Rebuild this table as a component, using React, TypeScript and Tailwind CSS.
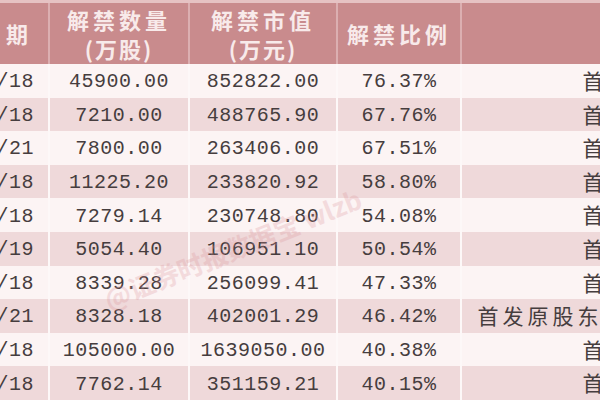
import React from "react";

type Row = {
  date: string;
  shares: string;
  value: string;
  ratio: string;
  kind: string;
};

const ROWS: Row[] = [
  { date: "2019/01/18", shares: "45900.00", value: "852822.00", ratio: "76.37%", kind: "首发原股东限售股份" },
  { date: "2019/01/18", shares: "7210.00", value: "488765.90", ratio: "67.76%", kind: "首发原股东限售股份" },
  { date: "2019/01/21", shares: "7800.00", value: "263406.00", ratio: "67.51%", kind: "首发原股东限售股份" },
  { date: "2019/01/18", shares: "11225.20", value: "233820.92", ratio: "58.80%", kind: "首发原股东限售股份" },
  { date: "2019/01/18", shares: "7279.14", value: "230748.80", ratio: "54.08%", kind: "首发原股东限售股份" },
  { date: "2019/01/19", shares: "5054.40", value: "106951.10", ratio: "50.54%", kind: "首发原股东限售股份" },
  { date: "2019/01/18", shares: "8339.28", value: "256099.41", ratio: "47.33%", kind: "首发原股东限售股份" },
  { date: "2019/01/21", shares: "8328.18", value: "402001.29", ratio: "46.42%", kind: "首发原股东限售股份,首发机构配售股份" },
  { date: "2019/01/18", shares: "105000.00", value: "1639050.00", ratio: "40.38%", kind: "首发原股东限售股份" },
  { date: "2019/01/18", shares: "7762.14", value: "351159.21", ratio: "40.15%", kind: "首发原股东限售股份" },
];

const NUM = "font-['Liberation_Mono',monospace] text-[20px] tracking-[0.5px] text-[#463d3e]";
const CJK = "font-['Noto_Sans_CJK_SC',sans-serif]";

export default function App() {
  return (
    <div className="relative w-[600px] h-[400px] overflow-hidden bg-[#fcf4f4]">
      {/* Header */}
      <div className="flex flex-col h-[64px]">
        <div className="h-[3px] bg-[#e6c2c3]" />
        <div className={`flex flex-1 bg-[#c98b8d] text-[#f8eaea] font-bold text-[22px] tracking-[4px] leading-[29px] ${CJK}`}>
          <div className="w-[50px] shrink-0 flex items-center justify-end overflow-hidden pr-[16px] border-r-2 border-[#dcafb1]">
            <span className="whitespace-nowrap">解禁日期</span>
          </div>
          <div className="w-[140px] shrink-0 flex flex-col items-center justify-center border-r-2 border-[#dcafb1]">
            <span>解禁数量</span>
            <span className="tracking-[2px]">(万股)</span>
          </div>
          <div className="w-[148px] shrink-0 flex flex-col items-center justify-center border-r-2 border-[#dcafb1]">
            <span>解禁市值</span>
            <span className="tracking-[2px]">(万元)</span>
          </div>
          <div className="w-[124px] shrink-0 flex items-center justify-center border-r-2 border-[#dcafb1]">
            <span>解禁比例</span>
          </div>
          <div className="flex-1" />
        </div>
      </div>

      {/* Body */}
      <div className="flex flex-col">
        {ROWS.map((r, i) => (
          <div
            key={i}
            className={`flex h-[33.6px] ${i % 2 === 1 ? "bg-[#efd9da]" : "bg-[#fcf4f4]"}`}
          >
            <div className={`w-[50px] shrink-0 flex items-center justify-end overflow-hidden pr-[14px] pt-[3px] border-r-2 border-[#fdf8f8] ${NUM}`}>
              <span className="whitespace-nowrap">{r.date}</span>
            </div>
            <div className={`w-[140px] shrink-0 flex items-center justify-center pt-[3px] border-r-2 border-[#fdf8f8] ${NUM}`}>
              {r.shares}
            </div>
            <div className={`w-[148px] shrink-0 flex items-center justify-center pt-[3px] border-r-2 border-[#fdf8f8] ${NUM}`}>
              {r.value}
            </div>
            <div className={`w-[124px] shrink-0 flex items-center justify-center pt-[3px] border-r-2 border-[#fdf8f8] ${NUM}`}>
              {r.ratio}
            </div>
            <div className={`w-[466px] shrink-0 flex items-center justify-center text-[21px] tracking-[4px] text-[#463d3e] ${CJK}`}>
              <span className="whitespace-nowrap">{r.kind}</span>
            </div>
          </div>
        ))}
      </div>

      {/* Watermark */}
      <div
        className={`absolute left-[105px] top-[280px] -rotate-[22deg] origin-left whitespace-nowrap text-[26px] font-bold text-[#d98f96] opacity-25 pointer-events-none ${CJK}`}
      >
        @证券时报数据宝 wlzb
      </div>
    </div>
  );
}
